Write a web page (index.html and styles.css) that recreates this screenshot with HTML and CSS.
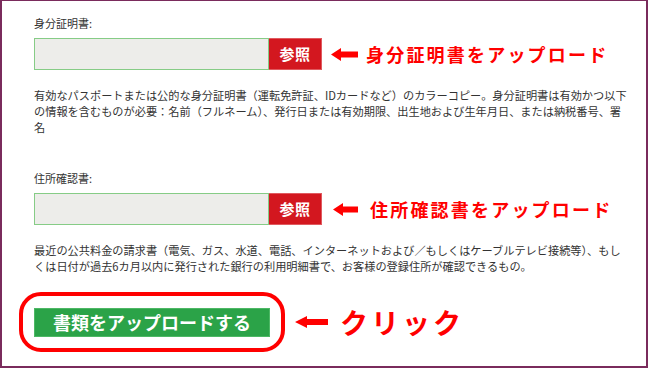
FILE: index.html
```html
<!DOCTYPE html>
<html lang="ja">
<head>
<meta charset="utf-8">
<link rel="stylesheet" href="styles.css">
</head>
<body>
<div class="frame">
  <div class="label first">身分証明書:</div>
  <div class="row">
    <div class="file">
      <div class="field"></div>
      <div class="browse">参照</div>
    </div>
    <div class="note note1">
      <svg class="arrow" width="27" height="13" viewBox="0 0 27 13"><polygon points="0,6.5 10,0 10,3.5 27,3.5 27,9.5 10,9.5 10,13" fill="#ff0000"/></svg>
      <span class="note-text">身分証明書をアップロード</span>
    </div>
  </div>
  <p class="desc">有効なパスポートまたは公的な身分証明書（運転免許証、IDカードなど）のカラーコピー。身分証明書は有効かつ以下<br>の情報を含むものが必要：名前（フルネーム）、発行日または有効期限、出生地および生年月日、または納税番号、署<br>名</p>

  <div class="label second">住所確認書:</div>
  <div class="row">
    <div class="file">
      <div class="field"></div>
      <div class="browse">参照</div>
    </div>
    <div class="note note2">
      <svg class="arrow" width="25" height="13" viewBox="0 0 25 13"><polygon points="0,6.5 10,0 10,3.5 25,3.5 25,9.5 10,9.5 10,13" fill="#ff0000"/></svg>
      <span class="note-text">住所確認書をアップロード</span>
    </div>
  </div>
  <p class="desc">最近の公共料金の請求書（電気、ガス、水道、電話、インターネットおよび／もしくはケーブルテレビ接続等）、もし<br>くは日付が過去6カ月以内に発行された銀行の利用明細書で、お客様の登録住所が確認できるもの。</p>

  <div class="submit-row">
    <div class="ring">
      <div class="submit">書類をアップロードする</div>
    </div>
    <div class="note note3">
      <svg class="arrow" width="33" height="12" viewBox="0 0 33 12"><polygon points="0,6 12,0 12,3 33,3 33,9 12,9 12,12" fill="#ff0000"/></svg>
      <span class="click">クリック</span>
    </div>
  </div>
</div>
</body>
</html>
```

FILE: styles.css
```css
* { box-sizing: border-box; }
html, body { margin: 0; padding: 0; background: #ffffff; }
body {
  font-family: "Noto Sans CJK JP", "Noto Sans", sans-serif;
  color: #333333;
}
.frame {
  width: 648px;
  height: 368px;
  border-style: solid;
  border-color: #7a2b5c;
  border-width: 1px 2px 2px 2px;
  padding-left: 32px;
  overflow: hidden;
}
.label {
  font-size: 11px;
  line-height: 14px;
  height: 14px;
  color: #333333;
}
.label.first { margin-top: 15px; }
.label.second { margin-top: 36px; }
.row {
  display: flex;
  align-items: center;
  margin-top: 8px;
  height: 32px;
}
.file {
  display: flex;
  height: 32px;
}
.field {
  width: 235px;
  height: 32px;
  background: #ededea;
  border: 1px solid #86cc86;
}
.browse {
  width: 53px;
  height: 32px;
  background: #d3171f;
  border: 1px solid #e05a5f;
  border-left: none;
  color: #ffffff;
  font-weight: bold;
  font-size: 15px;
  line-height: 30px;
  text-align: center;
  letter-spacing: 0.5px;
}
.note {
  display: flex;
  align-items: center;
}
.note1 { margin-left: 9px; gap: 8px; }
.note2 { margin-left: 11px; gap: 12px; }
.note-text {
  color: #ff0000;
  font-weight: bold;
  font-size: 18px;
  letter-spacing: 2.2px;
  line-height: 22px;
}
.desc {
  margin: 17px 0 0 0;
  font-size: 11.2px;
  line-height: 16px;
  color: #333333;
  white-space: nowrap;
}
.submit-row {
  display: flex;
  align-items: center;
  margin-top: 18px;
}
.ring {
  margin-left: -15px;
  border: 4px solid #ff0000;
  border-radius: 22px;
  padding: 12px 11px 11px 11px;
}
.submit {
  width: 236px;
  height: 29px;
  background: #2ba348;
  border: 1px solid #4db865;
  color: #ffffff;
  font-weight: bold;
  font-size: 18px;
  line-height: 27px;
  text-align: center;
}
.note3 { margin-left: 10px; gap: 12px; }
.click {
  color: #ff0000;
  font-weight: bold;
  font-size: 28px;
  letter-spacing: 3px;
  line-height: 34px;
}
```
